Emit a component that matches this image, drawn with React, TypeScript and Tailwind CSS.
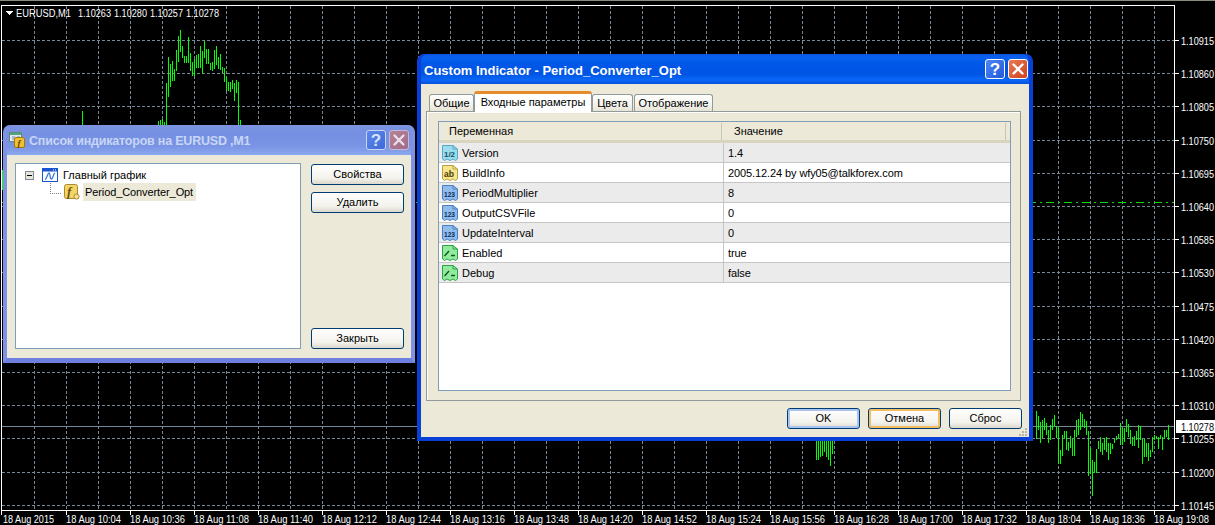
const PRICES = ['1.10915', '1.10860', '1.10805', '1.10750', '1.10695', '1.10640', '1.10585', '1.10530', '1.10475', '1.10420', '1.10365', '1.10310', '1.10255', '1.10200', '1.10145']
const TIMES = ['18 Aug 10:04', '18 Aug 10:36', '18 Aug 11:08', '18 Aug 11:40', '18 Aug 12:12', '18 Aug 12:44', '18 Aug 13:16', '18 Aug 13:48', '18 Aug 14:20', '18 Aug 14:52', '18 Aug 15:24', '18 Aug 15:56', '18 Aug 16:28', '18 Aug 17:00', '18 Aug 17:32', '18 Aug 18:04', '18 Aug 18:36', '18 Aug 19:08']
const QUOTES = ['1.10263', '1.10280', '1.10257', '1.10278']

// bars as [top, bottom], read off the picture in 3x crop units
const HILL: [number, number][] = [
  [288, 300], [285, 300], [283, 300], [291, 300], [175, 300], [97, 215], [117, 185], [108, 168], [133, 168], [75, 138], [33, 110], [15, 80], [63, 98], [93, 115], [93, 115], [37, 115], [85, 138], [110, 153], [103, 153], [90, 130], [87, 130], [63, 130], [78, 146], [48, 98], [72, 118], [72, 118], [115, 135], [110, 138], [75, 133], [63, 120], [97, 133], [87, 135], [127, 145], [130, 172], [155, 198], [170, 198], [172, 200], [165, 192], [175, 228], [165, 205], [170, 300], [285, 300],
]
const TAIL: [number, number][] = [
  [18, 102], [33, 75], [50, 113], [45, 98], [38, 75], [53, 90], [75, 113], [60, 105], [42, 75], [30, 63], [62, 100], [68, 177], [135, 177], [90, 152], [78, 98], [78, 135], [110, 138], [93, 128], [103, 153], [75, 153], [45, 95], [42, 90], [22, 75], [28, 65], [42, 70], [48, 90], [78, 212], [130, 208], [165, 273], [170, 205], [132, 205], [108, 132], [97, 140], [113, 150], [100, 135], [97, 142], [113, 165], [113, 147], [118, 132], [100, 115], [93, 105], [88, 100], [55, 120], [68, 120], [68, 112], [42, 80], [58, 95], [75, 117], [97, 123], [93, 122], [78, 105], [60, 130], [63, 105], [102, 177], [102, 155], [113, 155], [113, 167], [135, 155], [95, 142], [90, 105], [93, 103], [95, 132], [90, 103], [97, 135], [75, 103], [75, 97], [60, 105],
]
const DIP = [460, 460, 457, 456, 452, 457, 460, 466, 454]

const GRID_Y = PRICES.map((_, i) => Math.round(40 + i * 33.2) + 0.5)
const GRID_X = Array.from({ length: 36 }, (_, i) => 34.5 + i * 32)

function Chart() {
  return (
    <svg className="absolute inset-0" width={1215} height={525} shapeRendering="crispEdges">
      <rect x={0} y={0} width={1215} height={1} fill="#8c8a80" />
      <g stroke="#778899" strokeDasharray="3 2">
        {GRID_Y.map((y) => (
          <line key={y} x1={2} y1={y} x2={1174} y2={y} />
        ))}
        {GRID_X.map((x) => (
          <line key={x} x1={x} y1={6} x2={x} y2={510} />
        ))}
      </g>
      <line x1={2} y1={426.5} x2={1175} y2={426.5} stroke="#778899" />
      <line x1={2} y1={202.5} x2={1174} y2={202.5} stroke="#00e000" strokeDasharray="8 4 2 4" />
      <g stroke="#00ff00">
        {HILL.map(([a, b], i) => (
          <line key={i} x1={158.5 + i * 2} y1={25 + Math.round(a / 3)} x2={158.5 + i * 2} y2={25 + Math.round(b / 3)} />
        ))}
        {TAIL.map(([a, b], i) => (
          <line key={i} x1={1036.5 + i * 2} y1={405 + Math.round(a / 3)} x2={1036.5 + i * 2} y2={405 + Math.round(b / 3)} />
        ))}
        {DIP.map((b, i) => (
          <line key={i} x1={816.5 + i * 2} y1={440} x2={816.5 + i * 2} y2={b} />
        ))}
        <line x1={82.5} y1={111} x2={82.5} y2={126} />
        <line x1={2.5} y1={170} x2={2.5} y2={190} />
      </g>
      <g stroke="#ffffff">
        <line x1={1.5} y1={5} x2={1.5} y2={515} />
        <line x1={1} y1={5.5} x2={1175} y2={5.5} />
        <line x1={1174.5} y1={5} x2={1174.5} y2={511} />
        <line x1={1} y1={510.5} x2={1175} y2={510.5} />
        {GRID_Y.map((y) => (
          <line key={y} x1={1175} y1={y} x2={1179} y2={y} />
        ))}
        {TIMES.map((_, i) => (
          <line key={i} x1={66.5 + i * 64} y1={511} x2={66.5 + i * 64} y2={515} />
        ))}
      </g>
      <polygon points="6,11 13,11 9.5,15" fill="#ffffff" />
      <g fill="#ffffff" fontSize={11} shapeRendering="auto">
        <text x={16} y={17} textLength={55} lengthAdjust="spacingAndGlyphs">EURUSD,M1</text>
        {QUOTES.map((q, i) => (
          <text key={q} x={78 + i * 36} y={17} textLength={33} lengthAdjust="spacingAndGlyphs">{q}</text>
        ))}
        {PRICES.map((p, i) => (
          <text key={p} x={1214} y={GRID_Y[i] + 4} textAnchor="end" textLength={33} lengthAdjust="spacingAndGlyphs">{p}</text>
        ))}
        <text x={3} y={523} textLength={51} lengthAdjust="spacingAndGlyphs">18 Aug 2015</text>
        {TIMES.map((t, i) => (
          <text key={t} x={121 + i * 64} y={523} textAnchor="end" textLength={55} lengthAdjust="spacingAndGlyphs">{t}</text>
        ))}
      </g>
      <rect x={1176} y={420} width={39} height={13} fill="#ffffff" />
      <text x={1214} y={430.5} fontSize={11} fill="#000000" shapeRendering="auto" textAnchor="end" textLength={33} lengthAdjust="spacingAndGlyphs">1.10278</text>
    </svg>
  )
}

function CaptionButtons({ active }: { active: boolean }) {
  return (
    <div className="ml-auto flex items-center gap-[3px]">
      <div
        className={`flex h-[20px] w-[20px] items-center justify-center rounded-[3px] border text-[17px] font-bold leading-none ${
          active
            ? 'border-white bg-[linear-gradient(135deg,#4f86f5,#2259d8)] text-white'
            : 'border-[#c8d4f4] bg-[linear-gradient(135deg,#5d87e8,#3f6ad8)] text-[#d8e2fa]'
        }`}
      >
        ?
      </div>
      <div
        className={`flex h-[20px] w-[20px] items-center justify-center rounded-[3px] border ${
          active
            ? 'border-white bg-[linear-gradient(135deg,#ea7a55,#cf4220)]'
            : 'border-[#c8b8d8] bg-[linear-gradient(135deg,#b58398,#a06a88)]'
        }`}
      >
        <svg width={14} height={14} viewBox="0 0 14 14">
          <path d="M2.5 2.5 L11.5 11.5 M11.5 2.5 L2.5 11.5" stroke={active ? '#ffffff' : '#eadfe8'} strokeWidth={2.4} strokeLinecap="round" />
        </svg>
      </div>
    </div>
  )
}

function FormulaIcon({ className }: { className?: string }) {
  return (
    <svg className={className} width={16} height={16} viewBox="0 0 16 16">
      <rect x={0.5} y={0.5} width={13} height={14} rx={2} fill="#f5d468" stroke="#a88a30" />
      <text x={3} y={12} fontSize={13} fontWeight={700} fontStyle="italic" fontFamily="'Liberation Serif', serif" fill="#6a5510">f</text>
      <circle cx={12.5} cy={12.5} r={2.6} fill="#f8e090" stroke="#a88a30" />
    </svg>
  )
}

function WindowsIcon() {
  return (
    <svg className="shrink-0" width={17} height={18} viewBox="0 0 17 18">
      <rect x={0.5} y={1.5} width={12} height={9} fill="#dfe8f8" stroke="#6a8a78" />
      <rect x={1} y={2} width={11} height={2} fill="#50a878" />
      <path d="M3 6h3M3 8h3M8 6h3" stroke="#7a8aa8" />
      <rect x={5.5} y={6.5} width={10} height={10} rx={1.5} fill="#f0c030" stroke="#a07a10" />
      <text x={8.5} y={15} fontSize={9} fontWeight={700} fontStyle="italic" fontFamily="'Liberation Serif', serif" fill="#5a4508">f</text>
    </svg>
  )
}

function ChartIcon() {
  return (
    <svg className="ml-[8px] shrink-0" width={16} height={14} viewBox="0 0 16 14">
      <rect x={0.5} y={0.5} width={15} height={13} fill="#ffffff" stroke="#1a55d0" />
      <rect x={1} y={1} width={14} height={2.5} fill="#1a55d0" />
      <path d="M11 2h1M13 2h1" stroke="#ffffff" />
      <path d="M3 11.5 C5 11 5.5 5 7 5 C8.5 5 7.5 11 9.5 11 C11 11 11 6 13 5" fill="none" stroke="#3a78d8" strokeWidth={1.3} />
    </svg>
  )
}

function DialogButton({ label, tone }: { label: string; tone?: 'blue' | 'orange' }) {
  const ring =
    tone === 'blue'
      ? 'shadow-[inset_0_0_0_2px_#a9c4ef]'
      : tone === 'orange'
        ? 'shadow-[inset_0_0_0_2px_#f4bd62]'
        : ''
  return (
    <div
      className={`flex h-[21px] items-center justify-center rounded-[3px] border border-[#003c74] bg-[linear-gradient(180deg,#ffffff,#f3f2ec_70%,#dcd8cc)] text-[11px] text-black ${ring}`}
    >
      {label}
    </div>
  )
}

function ListDialog() {
  return (
    <div className="absolute left-[3px] top-[125px] flex h-[238px] w-[412px] flex-col rounded-t-[7px] border-x-[4px] border-b-[5px] border-x-[#7f92e4] border-b-[#6e7fe0] bg-[#7f92e4]">
      <div className="flex h-[30px] shrink-0 items-center rounded-t-[7px] bg-[linear-gradient(180deg,#7c93e0,#7590e2_30%,#7a94e4_70%,#8aa8ee)] pl-[2px] pr-[2px]">
        <WindowsIcon />
        <span className="ml-[3px] pt-[3px] text-[12.5px] font-bold tracking-[-0.2px] text-[#c8d6f6]">
          Список индикаторов на EURUSD ,M1
        </span>
        <CaptionButtons active={false} />
      </div>
      <div className="flex flex-1 bg-[#ece9d8] pl-[8px] pt-[8px]">
        <div className="h-[186px] w-[286px] border border-[#7f9db9] bg-white pt-[3px] text-[11px] text-black">
          <div className="flex h-[16px] items-center">
            <div className="ml-[9px] flex h-[9px] w-[9px] items-center justify-center border border-[#7f8a99] bg-[#e8e6da]">
              <div className="h-px w-[5px] bg-black" />
            </div>
            <ChartIcon />
            <span className="ml-[5px]">Главный график</span>
          </div>
          <div className="flex h-[18px] items-center">
            <div className="ml-[34px] h-[11px] w-[11px] self-start border-b border-l border-dotted border-[#808080]" />
            <FormulaIcon className="ml-[3px] shrink-0" />
            <span className="ml-[3px] flex h-[18px] w-[113px] items-center bg-[#ece9d8] pl-[2px] tracking-[-0.1px]">Period_Converter_Opt</span>
          </div>
        </div>
        <div className="ml-[10px] mt-px flex h-[185px] w-[93px] flex-col gap-[7px]">
          <DialogButton label="Свойства" />
          <DialogButton label="Удалить" />
          <div className="mt-auto">
            <DialogButton label="Закрыть" />
          </div>
        </div>
      </div>
    </div>
  )
}

function ParamIcon({ kind }: { kind: 'real' | 'text' | 'int' | 'bool' }) {
  const look = {
    real: { fill: '#9adcea', stroke: '#58a8c8', label: '1/2', ink: '#14506e', size: 8 },
    text: { fill: '#f6e68e', stroke: '#b8a040', label: 'ab', ink: '#4a3c08', size: 9 },
    int: { fill: '#8fbcea', stroke: '#4a80c0', label: '123', ink: '#0c2a60', size: 8 },
    bool: { fill: '#92ea9c', stroke: '#30a048', label: '', ink: '', size: 0 },
  }[kind]
  return (
    <svg className="ml-[3px] shrink-0" width={16} height={16} viewBox="0 0 16 16">
      <path d="M0.5 0.5 H11 L15.5 4 V14 L13.5 15.5 L11 14 L8 15.5 L5 14 L2.5 15.5 L0.5 14 Z" fill={look.fill} stroke={look.stroke} />
      <path d="M11 0.5 V4 H15.5" fill="none" stroke={look.stroke} />
      {kind === 'bool' ? (
        <path d="M2.5 11 L7 6 M9 10.5 H13" stroke="#0c5a20" strokeWidth={1.4} fill="none" />
      ) : (
        <text x={2} y={11.5} fontSize={look.size} fontWeight={700} fill={look.ink} textLength={kind === 'text' ? 10 : 11} lengthAdjust="spacingAndGlyphs">
          {look.label}
        </text>
      )}
    </svg>
  )
}

const PARAMS: { name: string; value: string; kind: 'real' | 'text' | 'int' | 'bool' }[] = [
  { name: 'Version', value: '1.4', kind: 'real' },
  { name: 'BuildInfo', value: '2005.12.24 by wfy05@talkforex.com', kind: 'text' },
  { name: 'PeriodMultiplier', value: '8', kind: 'int' },
  { name: 'OutputCSVFile', value: '0', kind: 'int' },
  { name: 'UpdateInterval', value: '0', kind: 'int' },
  { name: 'Enabled', value: 'true', kind: 'bool' },
  { name: 'Debug', value: 'false', kind: 'bool' },
]

function Tab({ label, width, active }: { label: string; width: number; active?: boolean }) {
  return active ? (
    <div
      className="z-10 flex h-[21px] items-center justify-center rounded-t-[3px] border-t-[3px] border-x border-t-[#e68b2c] border-x-[#919b9c] bg-white pb-[2px] text-[11px] text-black"
      style={{ width }}
    >
      {label}
    </div>
  ) : (
    <div
      className="flex h-[18px] items-center justify-center rounded-t-[3px] border-x border-t border-[#919b9c] bg-[linear-gradient(180deg,#ffffff,#f3f2ea_60%,#e4e1d2)] text-[11px] text-black"
      style={{ width }}
    >
      {label}
    </div>
  )
}

function IndicatorDialog() {
  return (
    <div className="absolute left-[417px] top-[54px] flex h-[387px] w-[616px] flex-col rounded-t-[7px] border-x-[4px] border-b-[4px] border-[#0a3fd8] bg-[#0a3fd8]">
      <div className="flex h-[30px] shrink-0 items-center rounded-t-[7px] bg-[linear-gradient(180deg,#0a55e0,#0a62f0_12%,#0058e8_30%,#0054e3_65%,#0a68f8_88%,#0a50d8)] pl-[3px] pr-[1px]">
        <span className="pt-[4px] text-[13px] font-bold text-white">Custom Indicator - Period_Converter_Opt</span>
        <CaptionButtons active />
      </div>
      <div className="relative flex flex-1 flex-col bg-[#ece9d8] pl-[5px] pt-[7px]">
        <div className="-mb-px ml-[3px] flex h-[21px] items-end">
          <Tab label="Общие" width={45} />
          <Tab label="Входные параметры" width={118} active />
          <Tab label="Цвета" width={41} />
          <div className="w-px" />
          <Tab label="Отображение" width={79} />
        </div>
        <div className="h-[290px] w-[595px] border border-[#919b9c] bg-[#ece9d8] pl-[11px] pt-[9px] shadow-[inset_1px_1px_0_#ffffff]">
          <div className="h-[270px] w-[573px] border border-[#7f9db9] bg-white text-[11px] text-black">
            <div className="flex h-[21px] items-center border-b-[3px] border-[#d8d4c0] bg-[#ece9d8] pt-px">
              <span className="w-[283px] border-r border-[#c8c5b4] pl-[10px]">Переменная</span>
              <span className="w-[284px] border-r border-[#c8c5b4] pl-[12px]">Значение</span>
            </div>
            {PARAMS.map((p, i) => (
              <div key={p.name} className={`flex h-[20px] items-center border-b border-[#c6c6c6] ${i % 2 === 0 ? 'bg-[#ebebeb]' : 'bg-white'}`}>
                <div className="flex h-full w-[285px] items-center border-r border-[#c6c6c6]">
                  <ParamIcon kind={p.kind} />
                  <span className="ml-[4px] pt-px">{p.name}</span>
                </div>
                <span className="pl-[4px] pt-px tracking-[-0.1px]">{p.value}</span>
              </div>
            ))}
          </div>
        </div>
        <div className="mt-[7px] flex justify-end gap-[8px] pr-[7px]">
          <div className="w-[73px]"><DialogButton label="OK" tone="blue" /></div>
          <div className="w-[73px]"><DialogButton label="Отмена" tone="orange" /></div>
          <div className="w-[73px]"><DialogButton label="Сброс" /></div>
        </div>
        <svg className="absolute bottom-0 right-0" width={10} height={10} shapeRendering="crispEdges">
          <path d="M6 1h2v2h-2zM3 4h2v2h-2zM6 4h2v2h-2zM0 7h2v2h-2zM3 7h2v2h-2zM6 7h2v2h-2z" fill="#b8b5a4" />
        </svg>
      </div>
    </div>
  )
}

export default function App() {
  return (
    <div className="relative h-[525px] w-[1215px] overflow-hidden bg-black font-['Liberation_Sans',sans-serif]">
      <Chart />
      <ListDialog />
      <IndicatorDialog />
    </div>
  )
}
